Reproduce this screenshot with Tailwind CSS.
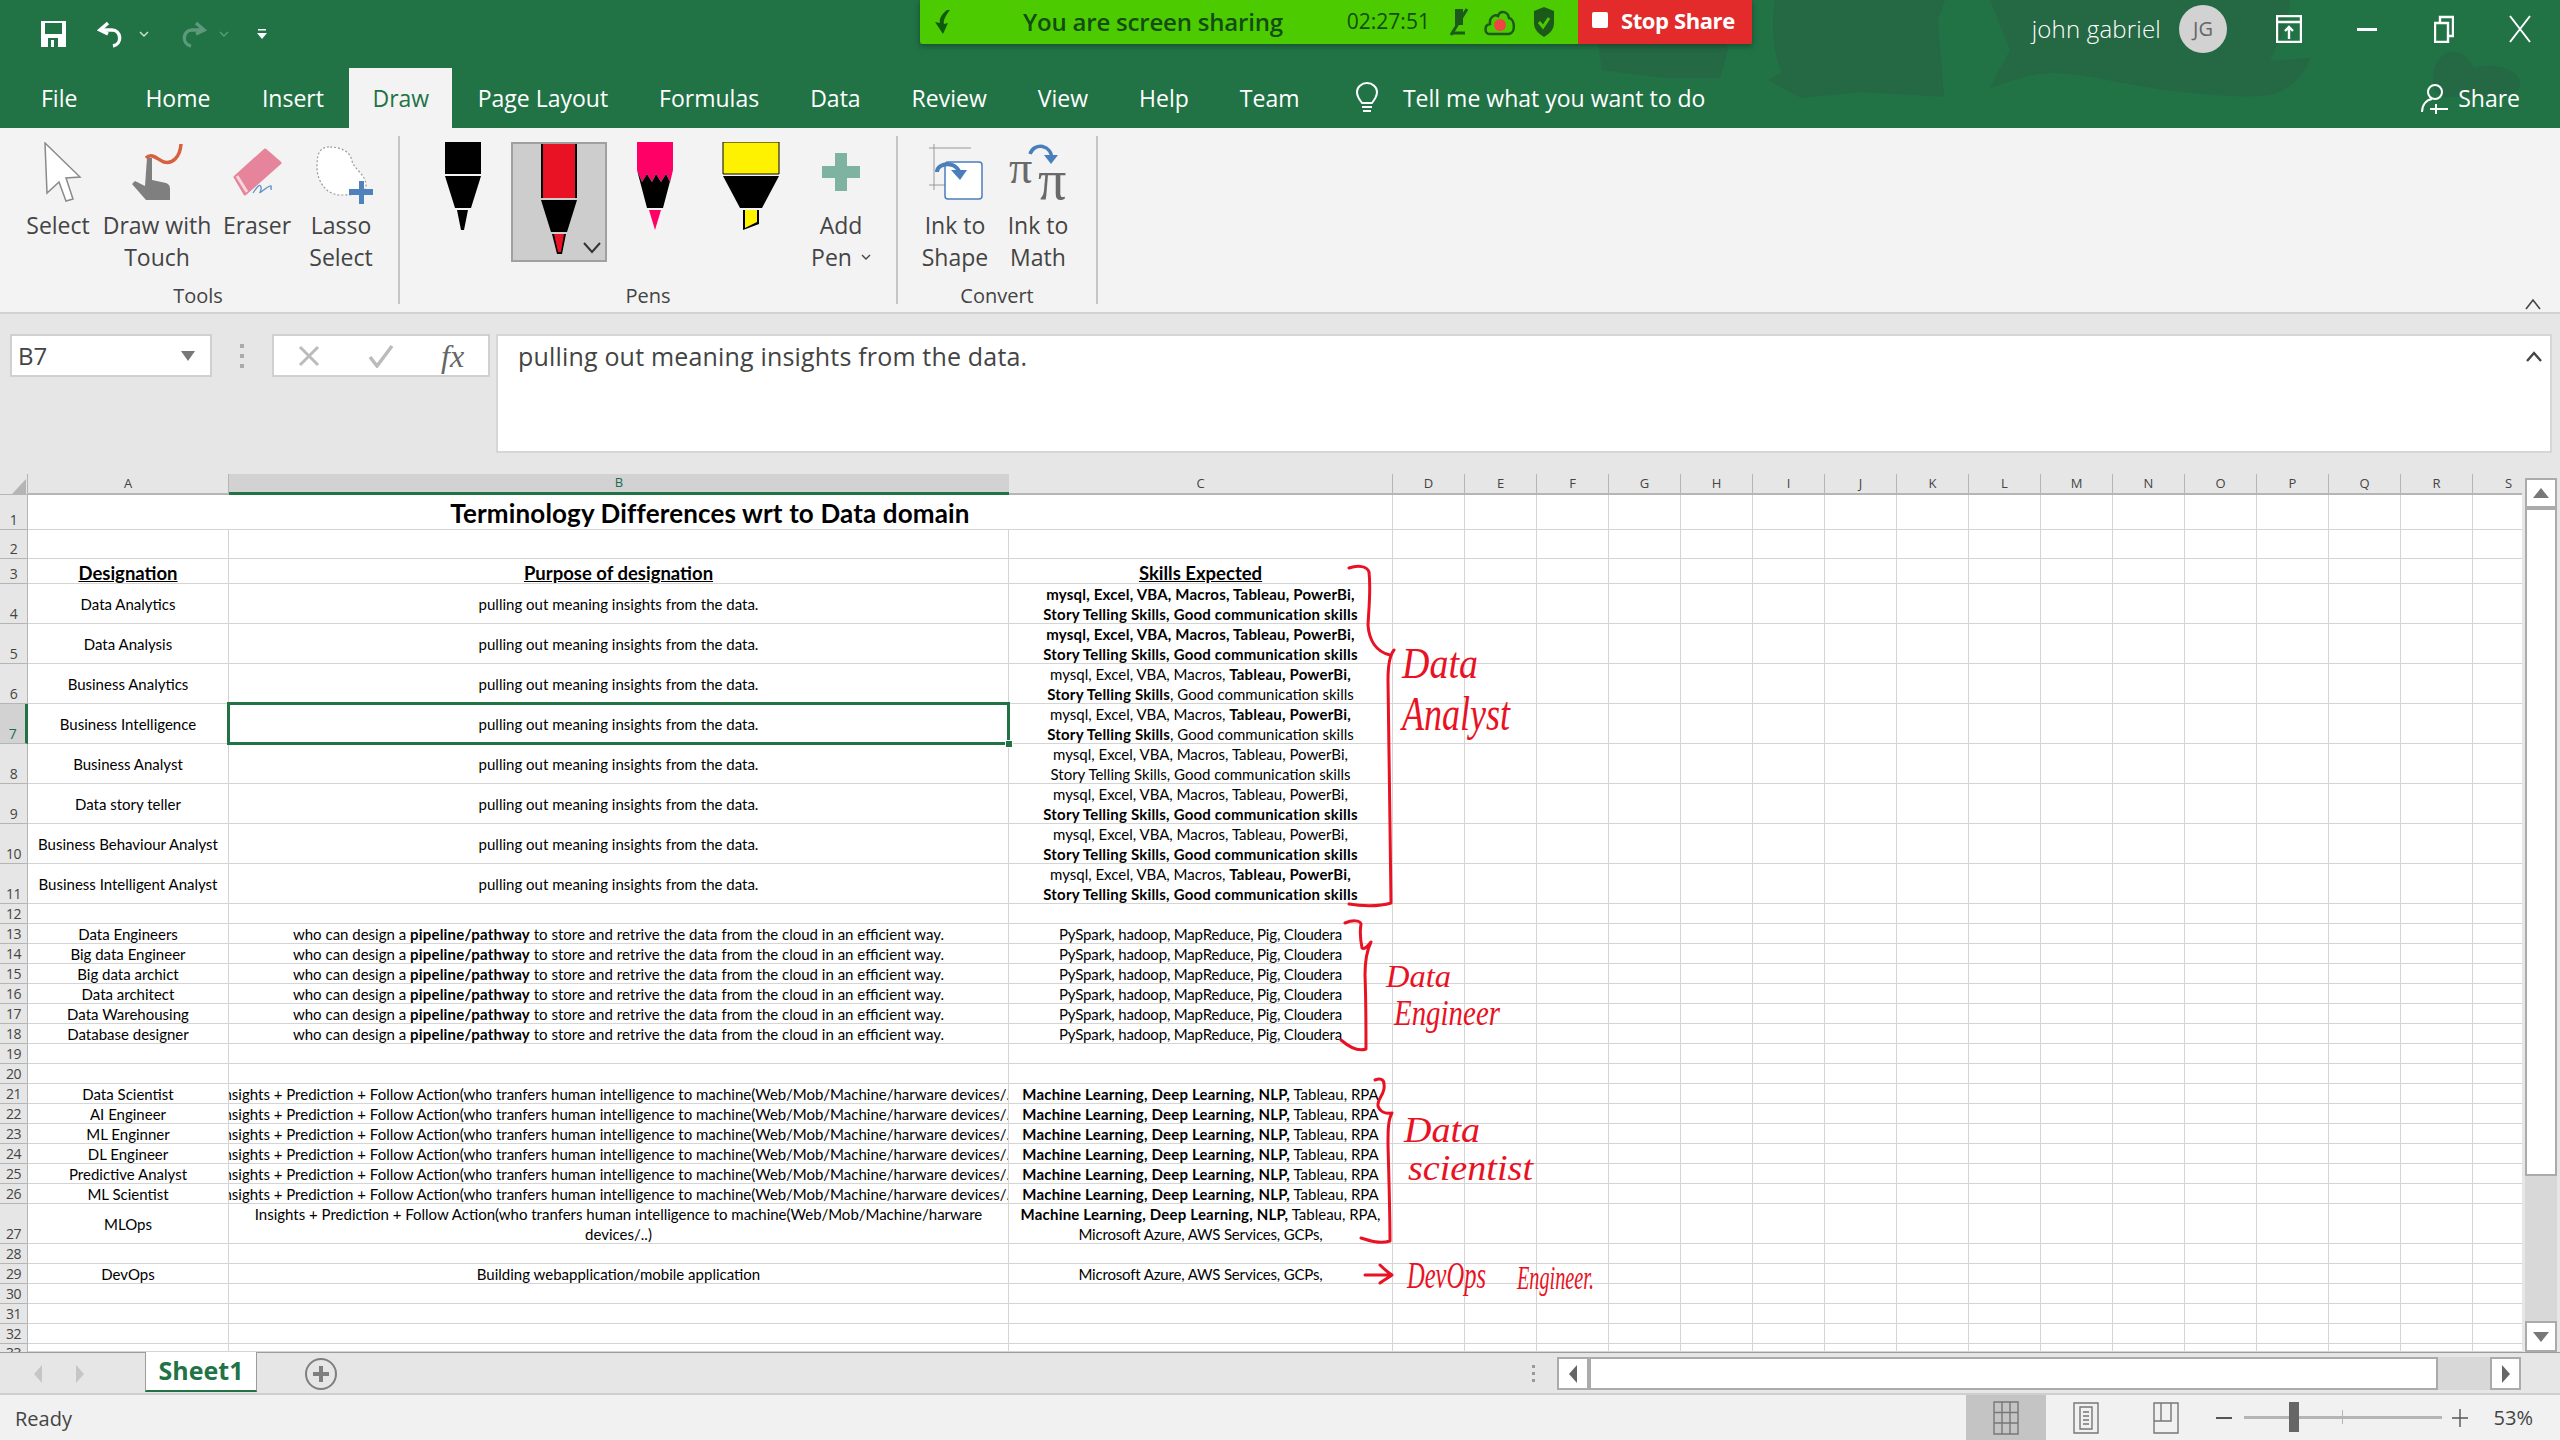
<!DOCTYPE html>
<html lang="en">
  <head>
    <meta charset="UTF-8" />
    <title>Excel - Draw tab</title>
    <script src="https://cdn.jsdelivr.net/npm/@tailwindcss/browser@4"></script>
  </head>
  <body class="bg-[#e6e6e6]">
    <div class="relative w-[2560px] h-[1440px] overflow-hidden flex flex-col font-['Open_Sans',sans-serif]">
      <!-- Title bar and tabs -->
      <header class="relative h-[128px] bg-[#217346] text-white shrink-0">
        <svg class="absolute left-0 top-0" width="2560" height="128" viewBox="0 0 2560 128" fill="#256844">
          <path d="M1598 0V43L1602 70 1664 78 1720 78 1728 50 1716 0Z" />
          <path d="M1775 0C1770 30 1775 60 1782 72L1768 80 1801 98 1862 92 1944 97 1938 20 1945 0Z" />
          <path d="M1990 0L2010 50 1990 88C2010 82 2030 73 2051 73 2090 73 2120 85 2168 90 2210 96 2250 98 2270 95 2290 90 2305 75 2310 58 2295 58 2280 62 2270 60 2280 40 2290 20 2290 0Z" />
          <path d="M2433 82C2433 65 2440 52 2453 52 2466 52 2470 62 2474 68 2490 62 2520 68 2520 84 2520 92 2510 97 2490 97L2445 97C2438 97 2433 90 2433 82Z" />
        </svg>

        <!-- Quick access -->
        <div class="relative h-[68px] flex items-center pl-[41px] gap-[31px]">
          <svg width="25" height="26" viewBox="0 0 25 26"><path d="M0 0h25v26H0z" fill="#fff" /><path d="M4 2h17v11H4z" fill="#217346" /><path d="M7 17h10v9H7z" fill="#217346" /><path d="M10 19h3v7h-3z" fill="#fff" /></svg>
          <div class="flex items-center gap-[12px]">
            <svg width="30" height="28" viewBox="0 0 30 28" fill="none" stroke="#fff" stroke-width="3.4"><path d="M11 3 L3 10 L11 14" /><path d="M4 10 H15 C24 10 26 24 16 26" /></svg>
            <svg width="10" height="6" viewBox="0 0 10 6" fill="none" stroke="#cfe3d8" stroke-width="1.4"><path d="M1 1l4 4 4-4" /></svg>
          </div>
          <div class="flex items-center gap-[12px] -ml-[3px]">
            <svg width="30" height="28" viewBox="0 0 30 28" fill="none" stroke="#5d9a7c" stroke-width="3.4"><path d="M19 3 L27 10 L19 14" /><path d="M26 10 H15 C6 10 4 24 14 26" /></svg>
            <svg width="10" height="6" viewBox="0 0 10 6" fill="none" stroke="#5d9a7c" stroke-width="1.4"><path d="M1 1l4 4 4-4" /></svg>
          </div>
          <svg width="10" height="10" viewBox="0 0 10 10" class="-ml-[3px]"><path d="M1 0h8v1.6H1zM0 4h10L5 10z" fill="#fff" /></svg>
          <div class="ml-auto flex items-center pr-[29px] -mt-[10px]">
            <span class="text-[24px] font-light tracking-[0.2px] mr-[18px]">john gabriel</span>
            <div class="w-[48px] h-[48px] rounded-full bg-[#d2d2d2] flex items-center justify-center text-[#666] text-[20px] mr-[49px]">JG</div>
            <svg width="26" height="28" viewBox="0 0 26 28" fill="none" stroke="#fff" stroke-width="2.4" class="mr-[55px]"><path d="M1 1h24v26H1zM1 7h24M13 24V12M9 16l4-4 4 4" /></svg>
            <div class="w-[20px] h-[3px] bg-white mr-[57px]"></div>
            <svg width="20" height="28" viewBox="0 0 20 28" fill="none" stroke="#fff" stroke-width="2.4" class="mr-[55px]"><path d="M1 8h13v19H1zM6 8V2h13v19h-5" /></svg>
            <svg width="22" height="28" viewBox="0 0 22 28" fill="none" stroke="#fff" stroke-width="2"><path d="M1 1l20 26M21 1L1 27" /></svg>
          </div>
        </div>

        <!-- Tabs -->
        <nav class="relative h-[60px] flex items-stretch text-[23px] leading-[60px] pl-[15px]">
          <span class="px-[26px] mr-[16px]">File</span>
          <span class="px-[26px]">Home</span>
          <span class="px-[25.5px]">Insert</span>
          <span class="px-[23px] bg-[#f3f3f3] text-[#217346]">Draw</span>
          <span class="px-[25.5px]">Page Layout</span>
          <span class="px-[25.5px]">Formulas</span>
          <span class="px-[25.5px]">Data</span>
          <span class="px-[25.5px]">Review</span>
          <span class="px-[25.5px]">View</span>
          <span class="px-[25.5px]">Help</span>
          <span class="px-[25.5px]">Team</span>
          <span class="flex items-center ml-[29px]">
            <svg width="26" height="32" viewBox="0 0 26 32" fill="none" stroke="#fff" stroke-width="2" class="mr-[23px]"><path d="M8 21C4 16 3 13 3 10a10 9 0 0 1 20 0c0 3-1 6-5 11zM8 25h10M9 29h8" /></svg>
            Tell me what you want to do
          </span>
          <span class="ml-auto flex items-center pr-[40px]">
            <svg width="30" height="32" viewBox="0 0 30 32" fill="none" stroke="#fff" stroke-width="2" class="mr-[7px]"><circle cx="14" cy="10" r="7" /><path d="M1 30c0-7 4-12 10-13M15 22v10M9 27h18" /></svg>
            Share
          </span>
        </nav>
      </header>

      <!-- Sharing bar, floats over the title bar -->
      <div class="absolute left-[920px] top-0 h-[44px] flex shadow-[0_2px_6px_rgba(0,0,0,0.35)]">
        <div class="w-[658px] bg-[#4ccb00] rounded-bl-[3px] flex items-center text-[#134d13] relative">
          <svg width="22" height="26" viewBox="0 0 22 26" class="ml-[13px]"><path d="M14 1C8 6 6 10 7 14L2 13l8 12 5-11-4 1c-1-4 2-9 6-14z" fill="#0f5a0f" /></svg>
          <span class="ml-[68px] text-[24px] font-semibold tracking-[-0.2px]">You are screen sharing</span>
          <span class="ml-[64px] text-[21px]">02:27:51</span>
          <svg width="22" height="30" viewBox="0 0 22 30" class="ml-[18px]"><path d="M7 2h8v16H7z" fill="#1c5a1c" /><path d="M3 28L19 2" stroke="#1c5a1c" stroke-width="3" /><path d="M5 26h12" stroke="#1c5a1c" stroke-width="3" /></svg>
          <svg width="32" height="30" viewBox="0 0 32 30" class="ml-[14px]"><path d="M6 27C0 27 0 18 6 17 5 10 11 7 14 9c2-6 10-5 11 2 6 1 7 15 0 16z" fill="#4ccb00" stroke="#1c5a1c" stroke-width="2.5" /><circle cx="16" cy="18" r="6" fill="#ef4444" /></svg>
          <svg width="22" height="32" viewBox="0 0 22 32" class="ml-[17px]"><path d="M11 1l10 4v12c0 7-5 11-10 14C6 28 1 24 1 17V5z" fill="#1c5a1c" /><path d="M6 16l4 5 6-9" fill="none" stroke="#4ccb00" stroke-width="3" /></svg>
        </div>
        <div class="w-[174px] bg-[#e32b2b] rounded-br-[3px] flex items-center text-white">
          <div class="ml-[14px] w-[16px] h-[16px] bg-white rounded-[2px] mb-[4px]"></div>
          <span class="ml-[13px] mb-[4px] text-[22px] font-bold tracking-[-0.4px]">Stop Share</span>
        </div>
      </div>

      <!-- Ribbon -->
      <section class="relative h-[186px] shrink-0 bg-[#f3f3f3] border-b-2 border-[#d2d2d2] pt-[8px] flex text-[23px] text-[#444] leading-[32px]">
        <!-- Tools -->
        <div class="w-[400px] h-[168px] flex flex-col border-r-2 border-[#c6c6c6]">
          <div class="h-[149px] flex pl-[18px] pt-[6px]">
            <div class="w-[80px] flex flex-col items-center">
              <svg width="80" height="67" viewBox="18 142 80 67"><path d="M45 143L80 177 66 178 73 199 66 201 59 182 47 193z" fill="#fff" stroke="#8a8a8a" stroke-width="1.5" /></svg>
              <span>Select</span>
            </div>
            <div class="w-[118px] flex flex-col items-center text-center">
              <svg width="118" height="67" viewBox="98 142 118 67"><path d="M147 158h5v22l14 3c3 1 4 3 4 6v11h-24l-14-16 3-3 10 5z" fill="#7f7f7f" /><path d="M146 158c6-6 12 2 18 4 8 2 16-4 17-18" fill="none" stroke="#d9603e" stroke-width="3.5" /></svg>
              <span>Draw with<br />Touch</span>
            </div>
            <div class="w-[82px] flex flex-col items-center">
              <svg width="82" height="67" viewBox="216 142 82 67"><path d="M265 150L280 163 245 194 235 177z" fill="#e5849a" stroke="#e5849a" stroke-linejoin="round" stroke-width="3" /><path d="M237 176l10 16" stroke="#f7d4dc" stroke-width="3" /><path d="M253 193c4-6 7-10 8-6s-3 7 0 5 6-5 9-6-1 4 2 3" fill="none" stroke="#5a8fc7" stroke-width="1.3" /></svg>
              <span>Eraser</span>
            </div>
            <div class="w-[86px] flex flex-col items-center text-center">
              <svg width="86" height="67" viewBox="298 142 86 67"><path d="M330 147c10 0 20 4 22 14 2 8 14 14 14 24s-14 10-26 10-23-12-23-28 4-20 13-20z" fill="#fff" stroke="#999" stroke-width="1.2" stroke-dasharray="2 2" /><path d="M359 181h5v23h-5zM349 189h24v6h-24z" fill="#4f81bd" /></svg>
              <span>Lasso<br />Select</span>
            </div>
          </div>
          <div class="h-[19px] leading-[22px] text-[20px] text-center pr-[2px]">Tools</div>
        </div>

        <!-- Pens -->
        <div class="w-[498px] h-[168px] flex flex-col border-r-2 border-[#c6c6c6]">
          <div class="h-[149px] flex pl-[14px] pt-[6px]">
            <div class="w-[97px] h-[120px]">
              <svg width="97" height="120" viewBox="414 142 97 120"><path d="M445 142h36v32h-36zM445 176h36l-10 32h-16zM457 210h11l-4 20h-3z" fill="#000" /></svg>
            </div>
            <div class="w-[96px] h-[120px] bg-[#cdcdcd] border-2 border-[#a0a0a0]">
              <svg width="92" height="116" viewBox="513 144 92 116"><path d="M541 144h36v54h-36z" fill="#000" /><path d="M543 144h32v54h-32z" fill="#e81224" /><path d="M541 200h36l-10 32h-16zM552 234h14l-4 20h-5z" fill="#000" /><path d="M554 234h10l-3 18h-3z" fill="#e81224" /><path d="M584 243l8 9 8-9" fill="none" stroke="#333" stroke-width="2" /></svg>
            </div>
            <div class="w-[96px] h-[120px]">
              <svg width="96" height="120" viewBox="607 142 96 120"><path d="M637 142h36v28l-3 12-4-8-5 8-5-8-4 8-5-8-5 8-5-12z" fill="#ff0066" /><path d="M637 170l5 12 5-8 5 8 4-8 5 8 5-8 4 8 3-12-10 38h-16z" fill="#000" /><path d="M649 210h12l-6 20z" fill="#ff0066" /></svg>
            </div>
            <div class="w-[94px] h-[120px]">
              <svg width="94" height="120" viewBox="703 142 94 120"><path d="M723 142h56v32h-56z" fill="#fff200" stroke="#000" stroke-width="1" /><path d="M723 176h56l-17 32h-22zM743 210h16v14l-16 6z" fill="#000" /><path d="M745 210h12v12l-12 6z" fill="#fff200" /></svg>
            </div>
            <div class="w-[88px] flex flex-col items-center text-center">
              <svg width="88" height="67" viewBox="797 142 88 67"><path d="M835 153h12v13h13v12h-13v13h-12v-13h-13v-12h13z" fill="#7fb3a1" /></svg>
              <span>Add</span>
              <span class="flex items-center">Pen<svg width="10" height="6" viewBox="0 0 10 6" fill="none" stroke="#444" stroke-width="1.4" class="ml-[9px]"><path d="M1 1l4 4 4-4" /></svg></span>
            </div>
          </div>
          <div class="h-[19px] leading-[22px] text-[20px] text-center">Pens</div>
        </div>

        <!-- Convert -->
        <div class="w-[200px] h-[168px] flex flex-col border-r-2 border-[#c6c6c6]">
          <div class="h-[149px] flex pl-[15px] pt-[6px]">
            <div class="w-[84px] flex flex-col items-center text-center">
              <svg width="84" height="67" viewBox="915 142 84 67"><path d="M931 148h42M936 144v46M931 185h16" stroke="#999" stroke-width="1" fill="none" /><rect x="947" y="162" width="37" height="37" rx="3" fill="#fff" stroke="#4a7ebb" stroke-width="1.5" /><path d="M939 172c0-10 22-12 23 4" fill="none" stroke="#4a7ebb" stroke-width="4" /><path d="M953 170h16l-7 10z" fill="#4a7ebb" /></svg>
              <span>Ink to<br />Shape</span>
            </div>
            <div class="w-[82px] flex flex-col items-center text-center">
              <svg width="82" height="67" viewBox="999 142 82 67" class="overflow-visible"><text x="1011" y="183" font-family="Liberation Serif" font-size="46" fill="#6a6a6a">π</text><text x="1040" y="199" font-family="Liberation Serif" font-size="56" fill="#6a6a6a">π</text><path d="M1032 154c4-12 22-10 22 6" fill="none" stroke="#4a7ebb" stroke-width="3.5" /><path d="M1046 155h14l-7 9z" fill="#4a7ebb" /></svg>
              <span>Ink to<br />Math</span>
            </div>
          </div>
          <div class="h-[19px] leading-[22px] text-[20px] text-center">Convert</div>
        </div>
        <svg class="absolute right-[19px] bottom-[2px]" width="16" height="12" viewBox="0 0 16 12" fill="none" stroke="#444" stroke-width="1.6"><path d="M1 11L8 2l7 9" /></svg>
      </section>

      <!-- Formula bar -->
      <section class="relative h-[160px] shrink-0 bg-[#e6e6e6] flex items-start pt-[20px] pl-[10px]">
        <div class="w-[202px] h-[43px] bg-white border-2 border-[#d0d0d0] flex items-center justify-between pl-[6px] pr-[14px] text-[24px] text-[#444]">
          B7
          <svg width="16" height="12" viewBox="0 0 16 12"><path d="M1 1h14L8 11z" fill="#777" /></svg>
        </div>
        <div class="w-[60px] h-[43px] flex flex-col items-center justify-center gap-[6px]">
          <div class="w-[4px] h-[4px] bg-[#aaa]"></div><div class="w-[4px] h-[4px] bg-[#aaa]"></div><div class="w-[4px] h-[4px] bg-[#aaa]"></div>
        </div>
        <div class="w-[218px] h-[43px] bg-white border-2 border-[#d0d0d0] flex items-center pl-[24px]">
          <svg width="22" height="22" viewBox="0 0 22 22" fill="none" stroke="#bbb" stroke-width="3"><path d="M2 2l18 18M20 2L2 20" /></svg>
          <svg width="26" height="24" viewBox="0 0 26 24" fill="none" stroke="#bbb" stroke-width="3.5" class="ml-[48px]"><path d="M2 13l7 9L24 2" /></svg>
          <span class="ml-[47px] font-['Liberation_Serif',serif] italic text-[32px] leading-[30px] text-[#666]">fx</span>
        </div>
        <div class="ml-[6px] w-[2056px] h-[119px] bg-white border-2 border-[#d6d6d6] pl-[20px] text-[25px] leading-[40px] text-[#444] tracking-[0.18px] relative">
          pulling out meaning insights from the data.
          <svg class="absolute right-[8px] top-[14px]" width="16" height="12" viewBox="0 0 16 12" fill="none" stroke="#444" stroke-width="2.4"><path d="M1 11L8 3l7 8" /></svg>
        </div>
      </section>

      <!-- Sheet -->
      <section class="h-[878px] shrink-0 flex bg-white">
        <div id="sheet" class="w-[2522px] h-[878px] overflow-hidden grid grid-cols-[28px_201px_780px_384px_repeat(16,72px)] grid-rows-[21px_35px_29px_25px_repeat(8,40px)_repeat(15,20px)_40px_repeat(5,20px)_8px] font-['Lato',sans-serif] text-[15px] text-black"></div>
        <!-- Vertical scrollbar -->
        <div class="w-[38px] flex flex-col items-center bg-[#e6e6e6] pt-[4px]">
          <div class="w-[32px] h-[30px] bg-white border-2 border-[#ababab] flex items-center justify-center">
            <svg width="16" height="10" viewBox="0 0 16 10"><path d="M8 0l8 10H0z" fill="#777" /></svg>
          </div>
          <div class="w-[32px] h-[668px] bg-white border-2 border-[#ababab]"></div>
          <div class="w-[32px] flex-1 bg-[#d8d8d8]"></div>
          <div class="w-[32px] h-[31px] bg-white border-2 border-[#ababab] flex items-center justify-center">
            <svg width="16" height="10" viewBox="0 0 16 10"><path d="M0 0h16L8 10z" fill="#777" /></svg>
          </div>
        </div>
      </section>

      <!-- Sheet tabs -->
      <section class="h-[43px] shrink-0 bg-[#e6e6e6] border-t border-b-2 border-t-[#9c9c9c] border-b-[#cfcfcf] flex items-start">
        <svg width="145" height="40" viewBox="0 0 145 40"><path d="M42 12v18l-8-9zM76 12v18l8-9z" fill="#c6c6c6" /></svg>
        <div class="w-[112px] h-[40px] bg-white border-x border-[#9c9c9c] border-b-2 border-b-[#217346] -mt-px flex items-center justify-center text-[25px] font-bold text-[#217346]">Sheet1</div>
        <svg width="36" height="36" viewBox="0 0 36 36" class="ml-[46px] mt-[3px]" fill="none"><circle cx="18" cy="18" r="15" stroke="#7f7f7f" stroke-width="2" /><path d="M18 10v16M10 18h16" stroke="#7f7f7f" stroke-width="4" /></svg>
        <div class="ml-[1193px] flex flex-col gap-[4px] mt-[12px]"><div class="w-[3px] h-[3px] bg-[#999]"></div><div class="w-[3px] h-[3px] bg-[#999]"></div><div class="w-[3px] h-[3px] bg-[#999]"></div></div>
        <div class="ml-[22px] mt-[4px] flex h-[33px]">
          <div class="w-[32px] bg-white border-2 border-[#ababab] flex items-center justify-center"><svg width="8" height="18" viewBox="0 0 8 18"><path d="M8 0v18L0 9z" fill="#666" /></svg></div>
          <div class="w-[849px] bg-white border-2 border-[#ababab]"></div>
          <div class="w-[52px] bg-[#d8d8d8]"></div>
          <div class="w-[31px] bg-white border-2 border-[#ababab] flex items-center justify-center"><svg width="8" height="18" viewBox="0 0 8 18"><path d="M0 0v18l8-9z" fill="#666" /></svg></div>
        </div>
      </section>

      <!-- Status bar -->
      <footer class="h-[45px] shrink-0 bg-[#f1f1f1] flex items-center text-[20px] text-[#444]">
        <span class="pl-[15px] pt-[2px]">Ready</span>
        <div class="ml-auto flex items-center h-full pr-[27px]">
          <div class="w-[80px] h-full bg-[#c4c4c4] flex items-center justify-center">
            <svg width="26" height="34" viewBox="0 0 26 34" fill="none" stroke="#777" stroke-width="1.4"><path d="M1 1h24v32H1zM1 11.500h24M1 22h24M9 1v32M17 1v32" /></svg>
          </div>
          <div class="w-[80px] flex justify-center">
            <svg width="26" height="32" viewBox="0 0 26 32" fill="none" stroke="#777" stroke-width="1.4"><path d="M1 1h24v30H1zM7 5h12v22H7zM10 10h6M10 14h6M10 18h6M10 22h6" /></svg>
          </div>
          <div class="w-[81px] flex justify-center">
            <svg width="26" height="32" viewBox="0 0 26 32" fill="none" stroke="#777" stroke-width="1.4"><path d="M1 1h24v30H1zM8 1v18h10V1M1 19h17" /></svg>
          </div>
          <div class="w-[16px] h-[2px] bg-[#555] ml-[9px]"></div>
          <div class="relative w-[198px] h-[3px] bg-[#b5b5b5] ml-[12px]">
            <div class="absolute left-[45px] -top-[14px] w-[10px] h-[30px] bg-[#666]"></div>
            <div class="absolute left-[98px] -top-[6px] w-[1px] h-[14px] bg-[#b5b5b5]"></div>
          </div>
          <svg width="16" height="20" viewBox="0 0 16 20" class="ml-[10px]"><path d="M8 1v18M0 10h16" stroke="#555" stroke-width="1.4" /></svg>
          <span class="ml-[26px]">53%</span>
        </div>
      </footer>

      <!-- Ink annotations drawn over the sheet -->
      <svg class="absolute left-0 top-0 pointer-events-none" width="2560" height="1440" viewBox="0 0 2560 1440" fill="none" stroke="#e81224" stroke-width="3" stroke-linecap="round" stroke-linejoin="round">
        <path d="M1349 568C1358 565 1367 566 1369 572C1371 590 1369 605 1368 625C1369 640 1376 652 1390 655M1394 650C1389 656 1388 668 1388 680C1389 740 1390 830 1391 903C1378 907 1360 906 1349 904" />
        <path d="M1345 923C1352 920 1360 920 1361 924C1360 930 1360 938 1362 948C1364 950 1368 946 1371 942C1366 952 1365 962 1365 975C1366 1000 1366 1030 1366 1049C1358 1052 1348 1046 1341 1040" />
        <path d="M1375 1080C1380 1078 1384 1079 1384 1084C1386 1094 1377 1098 1378 1106C1380 1112 1386 1114 1392 1113C1388 1120 1388 1130 1388 1145C1389 1180 1390 1215 1390 1241C1380 1244 1370 1241 1361 1238" />
        <path d="M1365 1275H1392M1380 1265C1385 1270 1389 1273 1392 1275C1388 1278 1384 1280 1380 1283" />
        <g fill="#e81224" stroke="none" font-family="Liberation Serif, serif" font-style="italic">
          <text x="1402" y="678" font-size="44" textLength="76" lengthAdjust="spacingAndGlyphs">Data</text>
          <text x="1402" y="730" font-size="48" textLength="108" lengthAdjust="spacingAndGlyphs">Analyst</text>
          <text x="1386" y="987" font-size="32" textLength="65" lengthAdjust="spacingAndGlyphs">Data</text>
          <text x="1394" y="1025" font-size="36" textLength="106" lengthAdjust="spacingAndGlyphs">Engineer</text>
          <text x="1404" y="1142" font-size="36" textLength="76" lengthAdjust="spacingAndGlyphs">Data</text>
          <text x="1408" y="1180" font-size="36" textLength="125" lengthAdjust="spacingAndGlyphs">scientist</text>
          <text x="1407" y="1288" font-size="38" textLength="79" lengthAdjust="spacingAndGlyphs">DevOps</text>
          <text x="1517" y="1289" font-size="34" textLength="77" lengthAdjust="spacingAndGlyphs">Engineer.</text>
        </g>
      </svg>
    </div>

    <script>
      const b = (t) => `<b class="font-bold tracking-[0.2px]">${t}</b>`;
      const tight = (t) => `<span class="tracking-[-0.17px]">${t}</span>`;
      const line1 = "mysql, Excel, VBA, Macros, Tableau, PowerBi,";
      const line2 = "Story Telling Skills, Good communication skills";
      const mixed1 = "mysql, Excel, VBA, Macros, " + b("Tableau, PowerBi,");
      const mixed2 = b("Story Telling Skills") + ", Good communication skills";
      const purpose = "pulling out meaning insights from the data.";
      const pipeline = "who can design a " + b("pipeline/pathway") + " to store and retrive the data from the cloud in an efficient way.";
      const insights = "Insights + Prediction + Follow Action(who tranfers human intelligence to machine(Web/Mob/Machine/harware devices/..)";
      const pyspark = tight("PySpark, hadoop, MapReduce, Pig, Cloudera");
      const azure = tight("Microsoft Azure, AWS Services, GCPs,");
      const ml = b("Machine Learning, Deep Learning, NLP,") + " Tableau, RPA";

      // row number -> [A, B, C]
      const cells = {
        4: ["Data Analytics", purpose, b(line1) + "<br>" + b(line2)],
        5: ["Data Analysis", purpose, b(line1) + "<br>" + b(line2)],
        6: ["Business Analytics", purpose, mixed1 + "<br>" + mixed2],
        7: ["Business Intelligence", purpose, mixed1 + "<br>" + mixed2],
        8: ["Business Analyst", purpose, line1 + "<br>" + line2],
        9: ["Data story teller", purpose, line1 + "<br>" + b(line2)],
        10: ["Business Behaviour Analyst", purpose, line1 + "<br>" + b(line2)],
        11: ["Business Intelligent Analyst", purpose, mixed1 + "<br>" + b(line2)],
        13: ["Data Engineers", pipeline, pyspark],
        14: ["Big data Engineer", pipeline, pyspark],
        15: ["Big data archict", pipeline, pyspark],
        16: ["Data architect", pipeline, pyspark],
        17: ["Data Warehousing", pipeline, pyspark],
        18: ["Database designer", pipeline, pyspark],
        21: ["Data Scientist", insights, ml],
        22: ["AI Engineer", insights, ml],
        23: ["ML Enginner", insights, ml],
        24: ["DL Engineer", insights, ml],
        25: ["Predictive Analyst", insights, ml],
        26: ["ML Scientist", insights, ml],
        27: [
          "MLOps",
          "Insights + Prediction + Follow Action(who tranfers human intelligence to machine(Web/Mob/Machine/harware<br>devices/..)",
          ml + ",<br>" + azure,
        ],
        29: ["DevOps", "Building webapplication/mobile application", azure],
      };

      const gridCell = "border-r border-b border-[#d4d4d4] flex items-center justify-center text-center whitespace-nowrap overflow-hidden leading-[20px]";
      const letters = "ABCDEFGHIJKLMNOPQRS".split("");
      let html = "";

      // Header row
      html += `<div class="bg-[#e6e6e6] border-b border-r border-[#b5b5b5] flex items-end justify-end"><svg width="16" height="16" viewBox="0 0 16 16"><path d="M15 1v15H1z" fill="#b5b5b5" /></svg></div>`;
      letters.forEach((l, i) => {
        if (i === 1) {
          html += `<div class="bg-[#d2d2d2] border-b-[3px] border-[#217346] flex items-center justify-center text-[13px] text-[#1e6b4f] font-['Open_Sans',sans-serif]">${l}</div>`;
        } else {
          html += `<div class="bg-[#e6e6e6] border-b-2 border-r border-[#b5b5b5] flex items-center justify-center text-[13px] text-[#444] font-['Open_Sans',sans-serif]">${l}</div>`;
        }
      });

      for (let r = 1; r <= 33; r++) {
        // Row header
        if (r === 7) {
          html += `<div class="bg-[#d2d2d2] border-r-[3px] border-b border-r-[#217346] border-b-[#b5b5b5] flex items-end justify-center text-[14px] leading-[18px] text-[#1e6b4f] font-['Open_Sans',sans-serif] tracking-[-0.5px]">${r}</div>`;
        } else if (r === 33) {
          html += `<div class="bg-[#e6e6e6] border-r border-[#b5b5b5] flex items-start justify-center overflow-hidden text-[14px] leading-[18px] text-[#444] font-['Open_Sans',sans-serif] tracking-[-0.5px]">${r}</div>`;
        } else {
          html += `<div class="bg-[#e6e6e6] border-r border-b border-[#b5b5b5] flex items-end justify-center text-[14px] leading-[18px] text-[#444] font-['Open_Sans',sans-serif] tracking-[-0.5px]">${r}</div>`;
        }

        if (r === 1) {
          html += `<div class="col-span-3 ${gridCell} pt-[2px] text-[26px] font-bold tracking-[0.15px]">Terminology Differences wrt to Data domain</div>`;
        } else if (r === 3) {
          html += `<div class="${gridCell} items-end font-bold underline text-[18.5px]">Designation</div>`;
          html += `<div class="${gridCell} items-end font-bold underline text-[18.5px]">Purpose of designation</div>`;
          html += `<div class="${gridCell} items-end font-bold underline text-[18.5px]">Skills Expected</div>`;
        } else {
          const row = cells[r] || ["", "", ""];
          html += `<div class="${gridCell}">${row[0]}</div>`;
          if (r === 7) {
            html += `<div class="relative ${gridCell} overflow-visible"><span class="shrink-0">${row[1]}</span><div class="absolute -left-[2px] -top-[2px] -right-[2px] -bottom-[2px] border-[3px] border-[#217346]"></div><div class="absolute -right-[5px] -bottom-[5px] w-[8px] h-[8px] bg-[#217346] border border-white"></div></div>`;
          } else {
            html += `<div class="${gridCell}"><span class="shrink-0">${row[1]}</span></div>`;
          }
          html += `<div class="${gridCell}"><span class="shrink-0">${row[2]}</span></div>`;
        }
        for (let i = 3; i < letters.length; i++) {
          html += `<div class="border-r border-b border-[#d4d4d4]"></div>`;
        }
      }

      document.getElementById("sheet").innerHTML = html;
    </script>
  </body>
</html>
